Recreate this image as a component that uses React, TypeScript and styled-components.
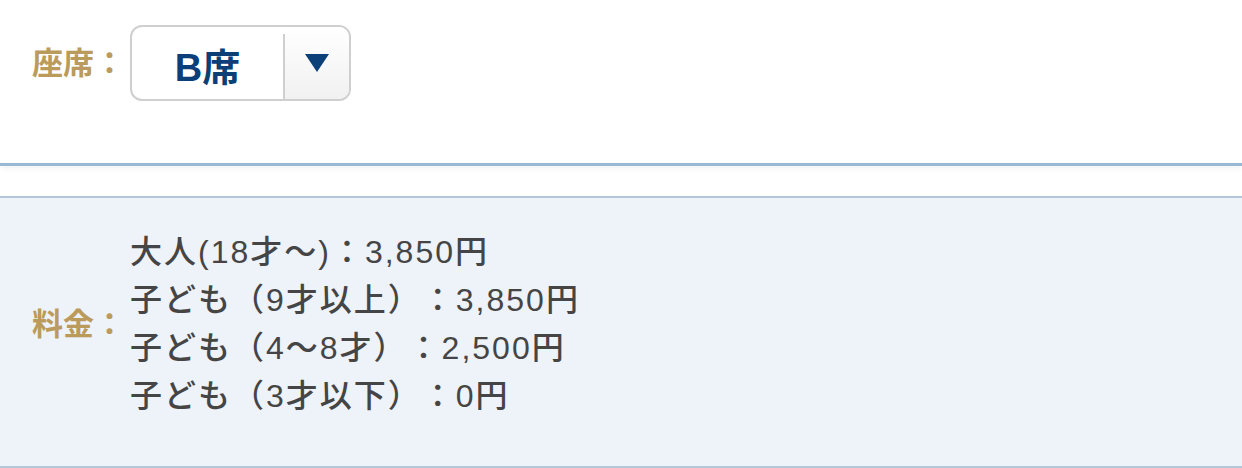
import React from "react";
import styled, { createGlobalStyle } from "styled-components";

const GlobalStyle = createGlobalStyle`
  html, body {
    margin: 0;
    padding: 0;
    background: #ffffff;
  }
  body {
    font-family: "Liberation Sans", "Noto Sans CJK JP", sans-serif;
    -webkit-font-smoothing: antialiased;
  }
`;

const Page = styled.div`
  width: 1242px;
  height: 468px;
  overflow: hidden;
  background: #ffffff;
`;

const SeatSection = styled.section`
  box-sizing: border-box;
  height: 166px;
  padding: 25px 0 0 32px;
  border-bottom: 3px solid #9ab7d3;
  box-shadow: 0 2px 5px rgba(120, 140, 170, 0.12);
  display: flex;
  align-items: flex-start;
`;

const FieldRow = styled.div<{ $gap: number }>`
  display: flex;
  align-items: center;
  gap: ${(p) => p.$gap}px;
`;

const Label = styled.span`
  font-size: 31px;
  font-weight: 700;
  color: #bb9b5c;
  line-height: 1;
  white-space: nowrap;
  text-spacing-trim: space-all;
`;

const SelectBox = styled.div`
  box-sizing: border-box;
  width: 221px;
  height: 76px;
  border: 2px solid #cfcfcf;
  border-radius: 12px;
  overflow: hidden;
  display: flex;
  background: #ffffff;
`;

const SelectValue = styled.div`
  width: 151px;
  display: flex;
  align-items: center;
  justify-content: center;
  font-size: 38px;
  font-weight: 700;
  color: #0c3e77;
  padding-top: 2px;
`;

const SelectDivider = styled.div`
  width: 2px;
  margin-top: 7px;
  background: #cfcfcf;
`;

const SelectArrow = styled.div`
  width: 64px;
  display: flex;
  align-items: center;
  justify-content: center;
  background: linear-gradient(#ffffff, #f1f1f1);
`;

const PricePanel = styled.section`
  margin-top: 30px;
  border-top: 2px solid #b3c7d9;
  border-bottom: 2px solid #b3c7d9;
  background: #eef2f9;
  padding: 30px 32px 46px;
  display: flex;
`;

const PriceList = styled.ul`
  list-style: none;
  margin: 0;
  padding: 0;
  display: flex;
  flex-direction: column;
`;

const PriceItem = styled.li`
  font-size: 32px;
  font-weight: 500;
  line-height: 48px;
  height: 48px;
  letter-spacing: 2px;
  color: #454545;
  white-space: nowrap;
  text-spacing-trim: space-all;
`;

const prices = [
  "大人(18才〜)：3,850円",
  "子ども（9才以上）：3,850円",
  "子ども（4〜8才）：2,500円",
  "子ども（3才以下）：0円",
];

export default function App() {
  return (
    <Page>
      <GlobalStyle />
      <SeatSection>
        <FieldRow $gap={5}>
          <Label>座席：</Label>
          <SelectBox>
            <SelectValue>B席</SelectValue>
            <SelectDivider />
            <SelectArrow>
              <svg width="24" height="18" viewBox="0 0 24 18">
                <polygon points="0,0 24,0 12,18" fill="#0d3f78" />
              </svg>
            </SelectArrow>
          </SelectBox>
        </FieldRow>
      </SeatSection>
      <PricePanel>
        <FieldRow $gap={5}>
          <Label>料金：</Label>
          <PriceList>
            {prices.map((p) => (
              <PriceItem key={p}>{p}</PriceItem>
            ))}
          </PriceList>
        </FieldRow>
      </PricePanel>
    </Page>
  );
}
